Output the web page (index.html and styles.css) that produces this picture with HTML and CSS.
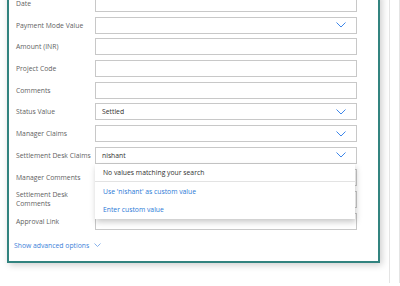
FILE: index.html
```html
<!DOCTYPE html>
<html>
	<head>
		<meta name="viewport" content="width=device-width,initial-scale=1.0">
		<title>Claim details</title>
		<link rel="stylesheet" href="styles.css">
	</head>
	<body>
		<div class="page">
			<div class="card">
				<div class="row">
					<label class="field-label">Date</label>
					<div class="field"></div>
				</div>
				<div class="row">
					<label class="field-label">Payment Mode Value</label>
					<div class="field dropdown">
						<span></span>
						<svg class="chevron" width="10" height="6" viewBox="0 0 10 6"><path d="M0.5 0.5 L5 5 L9.5 0.5" /></svg>
					</div>
				</div>
				<div class="row">
					<label class="field-label">Amount (INR)</label>
					<div class="field"></div>
				</div>
				<div class="row">
					<label class="field-label">Project Code</label>
					<div class="field"></div>
				</div>
				<div class="row">
					<label class="field-label">Comments</label>
					<div class="field"></div>
				</div>
				<div class="row">
					<label class="field-label">Status Value</label>
					<div class="field dropdown">
						<span>Settled</span>
						<svg class="chevron" width="10" height="6" viewBox="0 0 10 6"><path d="M0.5 0.5 L5 5 L9.5 0.5" /></svg>
					</div>
				</div>
				<div class="row">
					<label class="field-label">Manager Claims</label>
					<div class="field dropdown">
						<span></span>
						<svg class="chevron" width="10" height="6" viewBox="0 0 10 6"><path d="M0.5 0.5 L5 5 L9.5 0.5" /></svg>
					</div>
				</div>
				<div class="row">
					<label class="field-label single">Settlement Desk Claims</label>
					<div class="field dropdown open">
						<span>nishant</span>
						<svg class="chevron" width="10" height="6" viewBox="0 0 10 6"><path d="M0.5 0.5 L5 5 L9.5 0.5" /></svg>
						<div class="menu">
							<div class="menu-note">No values matching your search</div>
							<div class="menu-item">Use 'nishant' as custom value</div>
							<div class="menu-item">Enter custom value</div>
						</div>
					</div>
				</div>
				<div class="row">
					<label class="field-label">Manager Comments</label>
					<div class="field"></div>
				</div>
				<div class="row">
					<label class="field-label">Settlement Desk Comments</label>
					<div class="field"></div>
				</div>
				<div class="row">
					<label class="field-label">Approval Link</label>
					<div class="field"></div>
				</div>
				<div class="advanced">
					<span>Show advanced options</span>
					<svg class="adv-chevron" width="7" height="4" viewBox="0 0 7 4"><path d="M0.5 0.5 L3.5 3.5 L6.5 0.5" /></svg>
				</div>
			</div>
			<div class="rail"></div>
		</div>
	</body>
</html>
```

FILE: styles.css
```css
body {
	margin: 0;
	background: #fff;
	font-family: "Segoe UI", "Open Sans", sans-serif;
	font-size: 6.8px;
	overflow: hidden;
}

.page {
	display: flex;
	align-items: flex-start;
}

.card {
	margin-top: -7px;
	margin-left: 7px;
	width: 358px;
	border: 2px solid #32837f;
	padding: 0 8px 11px 7px;
	box-shadow: 2px 2px 7px rgba(0, 0, 0, 0.2);
	background: #fff;
}

.row {
	display: flex;
	align-items: center;
	min-height: 17px;
	margin-bottom: 4.7px;
}

.field-label {
	flex: none;
	width: 76px;
	margin-right: 3px;
	color: #5f5f5f;
	line-height: 9px;
}

.field-label.single {
	white-space: nowrap;
}

.field {
	flex: none;
	position: relative;
	box-sizing: border-box;
	width: 262px;
	height: 17px;
	border: 1px solid #c8c8c8;
	padding: 0 10px 0 6px;
	display: flex;
	align-items: center;
	justify-content: space-between;
	color: #323130;
}

.chevron path {
	fill: none;
	stroke: #3d86ea;
	stroke-width: 1;
}

/* Dropdown popup for the open field */
.menu {
	position: absolute;
	top: 16px;
	left: -1px;
	width: 260px;
	background: #fff;
	box-shadow: 1px 3px 6px rgba(0, 0, 0, 0.22);
	z-index: 2;
}

.menu-note {
	height: 17px;
	line-height: 17px;
	padding-left: 8px;
	color: #323130;
	border-bottom: 1px solid #e3e3e3;
}

.menu-item {
	height: 18px;
	line-height: 18px;
	padding-left: 8px;
	color: #2b79d6;
}

.menu-note + .menu-item {
	margin-top: 1px;
}

.advanced {
	margin-top: 11px;
	margin-left: -2px;
	color: #3b7fd9;
	display: flex;
	align-items: center;
	gap: 5px;
	line-height: 9px;
}

.adv-chevron path {
	fill: none;
	stroke: #6a9ee6;
	stroke-width: 0.8;
}

.rail {
	margin-left: 9px;
	width: 9px;
	height: 283px;
	border-left: 1px solid #e4e4e4;
	border-right: 1px solid #e4e4e4;
}
```
